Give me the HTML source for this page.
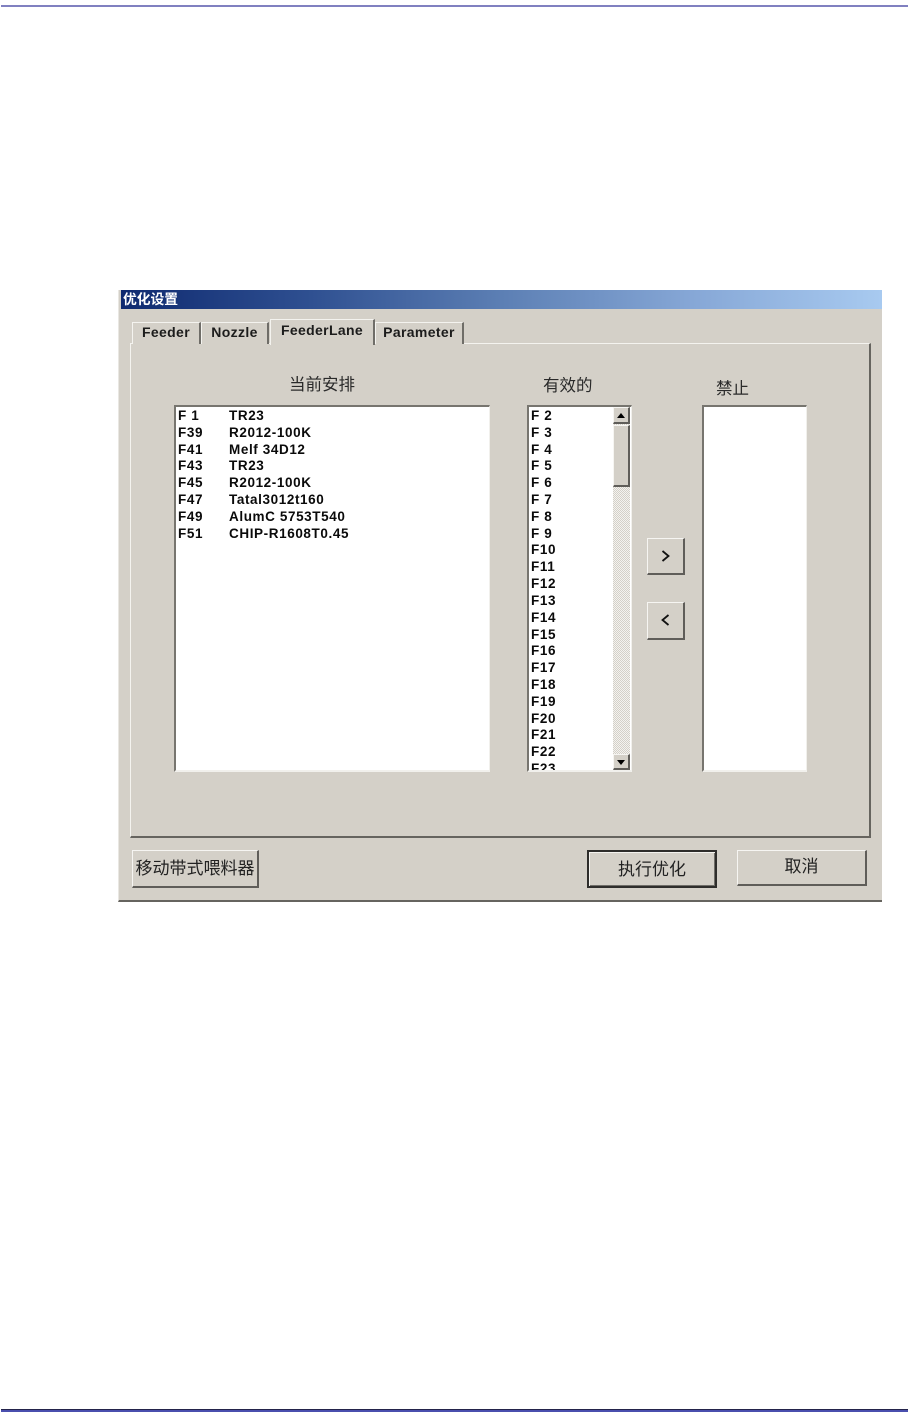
<!DOCTYPE html>
<html><head><meta charset="utf-8"><style>
html,body{margin:0;padding:0;background:#fff}
body{width:909px;height:1421px;position:relative;overflow:hidden;font-family:"Liberation Sans","Noto Sans CJK SC",sans-serif;color:#111}
.a{position:absolute;box-sizing:border-box}
.t{position:absolute;white-space:nowrap;line-height:17px}
#dlg{position:absolute;left:0;top:0;width:909px;height:1421px;filter:blur(.35px)}
.tab{position:absolute;box-sizing:border-box;background:#d4d0c8;border-top:1px solid #f4f3ef;border-left:1px solid #f4f3ef;border-right:2px solid #6f6d68;font-weight:bold;font-size:14px;letter-spacing:.35px;text-align:center;color:#1c1c1c;white-space:nowrap}
.list{position:absolute;box-sizing:border-box;background:#fff;border-style:solid;border-color:#77756f #f1f0ec #f1f0ec #77756f;border-width:2px 1px 2px 2px;overflow:hidden}
.it{position:absolute;font-weight:bold;font-size:13.5px;line-height:17px;white-space:nowrap;color:#0a0a0a;letter-spacing:.6px}
.btn{position:absolute;box-sizing:border-box;background:#d4d0c8;border-style:solid;border-color:#f6f5f2 #5f5d59 #5f5d59 #f6f5f2;border-width:1px 2px 2px 1px;text-align:center;color:#222;white-space:nowrap}
.cap{position:absolute;font-size:16.5px;line-height:20px;white-space:nowrap;color:#2a2a2a}
</style></head><body>
<div class="a" style="left:1px;top:5px;width:907px;height:2px;background:#8080c0"></div>
<div class="a" style="left:1px;top:1409px;width:907px;height:1px;background:#23234a"></div>
<div class="a" style="left:1px;top:1410px;width:907px;height:2px;background:#4a4fae"></div>
<div id="dlg">
<div class="a" style="left:118px;top:290px;width:764px;height:612px;background:#d4d0c8;border-bottom:2px solid #66645f;border-left:1px solid #e9e7e2"></div>
<div class="a" style="left:121px;top:290px;width:761px;height:19px;background:linear-gradient(90deg,#0f2a70 0%,#2f5091 25%,#5c7fb4 50%,#86a7d6 75%,#a8caf0 100%)"></div>
<div class="t" style="left:123px;top:290px;color:#fff;font-weight:bold;font-size:13.75px;font-family:'Noto Sans CJK SC',sans-serif">优化设置</div>

<div class="a" style="left:130px;top:343px;width:741px;height:495px;background:#d4d0c8;border-style:solid;border-color:#f4f3ef #66645f #66645f #f4f3ef;border-width:1px 2px 2px 1px"></div>
<div class="tab" style="left:132px;top:322px;width:69px;height:22px;line-height:19px">Feeder</div>
<div class="tab" style="left:201px;top:322px;width:68px;height:22px;line-height:19px">Nozzle</div>
<div class="tab" style="left:270px;top:319px;width:105px;height:26px;line-height:21px;border-bottom:0">FeederLane</div>
<div class="tab" style="left:375px;top:322px;width:89px;height:22px;line-height:19px">Parameter</div>

<div class="cap" style="left:289px;top:375px">当前安排</div>
<div class="cap" style="left:543px;top:376px">有效的</div>
<div class="cap" style="left:716px;top:379px">禁止</div>

<div class="list" style="left:174px;top:405px;width:316px;height:367px">
<div class="it" style="left:2px;top:0">F 1</div><div class="it" style="left:53px;top:0">TR23</div>
<div class="it" style="left:2px;top:17px">F39</div><div class="it" style="left:53px;top:17px">R2012-100K</div>
<div class="it" style="left:2px;top:34px">F41</div><div class="it" style="left:53px;top:34px">Melf 34D12</div>
<div class="it" style="left:2px;top:50px">F43</div><div class="it" style="left:53px;top:50px">TR23</div>
<div class="it" style="left:2px;top:67px">F45</div><div class="it" style="left:53px;top:67px">R2012-100K</div>
<div class="it" style="left:2px;top:84px">F47</div><div class="it" style="left:53px;top:84px">Tatal3012t160</div>
<div class="it" style="left:2px;top:101px">F49</div><div class="it" style="left:53px;top:101px">AlumC 5753T540</div>
<div class="it" style="left:2px;top:118px">F51</div><div class="it" style="left:53px;top:118px">CHIP-R1608T0.45</div>
</div>

<div class="list" style="left:527px;top:405px;width:105px;height:367px">
<div class="it" style="left:2px;top:0">F 2</div>
<div class="it" style="left:2px;top:17px">F 3</div>
<div class="it" style="left:2px;top:34px">F 4</div>
<div class="it" style="left:2px;top:50px">F 5</div>
<div class="it" style="left:2px;top:67px">F 6</div>
<div class="it" style="left:2px;top:84px">F 7</div>
<div class="it" style="left:2px;top:101px">F 8</div>
<div class="it" style="left:2px;top:118px">F 9</div>
<div class="it" style="left:2px;top:134px">F10</div>
<div class="it" style="left:2px;top:151px">F11</div>
<div class="it" style="left:2px;top:168px">F12</div>
<div class="it" style="left:2px;top:185px">F13</div>
<div class="it" style="left:2px;top:202px">F14</div>
<div class="it" style="left:2px;top:219px">F15</div>
<div class="it" style="left:2px;top:235px">F16</div>
<div class="it" style="left:2px;top:252px">F17</div>
<div class="it" style="left:2px;top:269px">F18</div>
<div class="it" style="left:2px;top:286px">F19</div>
<div class="it" style="left:2px;top:303px">F20</div>
<div class="it" style="left:2px;top:319px">F21</div>
<div class="it" style="left:2px;top:336px">F22</div>
<div class="it" style="left:2px;top:353px">F23</div>
<div class="a" style="left:84px;top:0;width:17px;height:363px;background:repeating-conic-gradient(#f4f3f0 0 25%,#d4d0c8 0 50%) 0 0/2px 2px"></div>
<div class="btn" style="left:84px;top:0;width:17px;height:17px"><svg width="14" height="14" style="position:absolute;left:0;top:0"><path d="M3 10h8L7 5z" fill="#000"/></svg></div>
<div class="btn" style="left:84px;top:18px;width:17px;height:62px"></div>
<div class="btn" style="left:84px;top:347px;width:17px;height:16px"><svg width="14" height="14" style="position:absolute;left:0;top:0"><path d="M3 5h8L7 10z" fill="#000"/></svg></div>
</div>

<div class="list" style="left:702px;top:405px;width:105px;height:367px"></div>

<div class="btn" style="left:647px;top:538px;width:38px;height:37px"><svg width="35" height="34" style="position:absolute;left:0;top:0"><path d="M14.5 12l6 5-6 5" fill="none" stroke="#111" stroke-width="1.8"/></svg></div>
<div class="btn" style="left:647px;top:602px;width:38px;height:38px"><svg width="35" height="35" style="position:absolute;left:0;top:0"><path d="M20.5 12l-6 5 6 5" fill="none" stroke="#111" stroke-width="1.8"/></svg></div>

<div class="btn" style="left:132px;top:850px;width:127px;height:38px;font-size:17px;line-height:36px">移动带式喂料器</div>
<div class="btn" style="left:587px;top:850px;width:130px;height:38px;font-size:17px;line-height:36px;border:2px solid #2e2d2b;box-shadow:inset 1px 1px 0 #f4f3ef,inset -1px -1px 0 #6f6d68">执行优化</div>
<div class="btn" style="left:737px;top:850px;width:130px;height:36px;font-size:17px;line-height:32px">取消</div>
</div>
</body></html>
